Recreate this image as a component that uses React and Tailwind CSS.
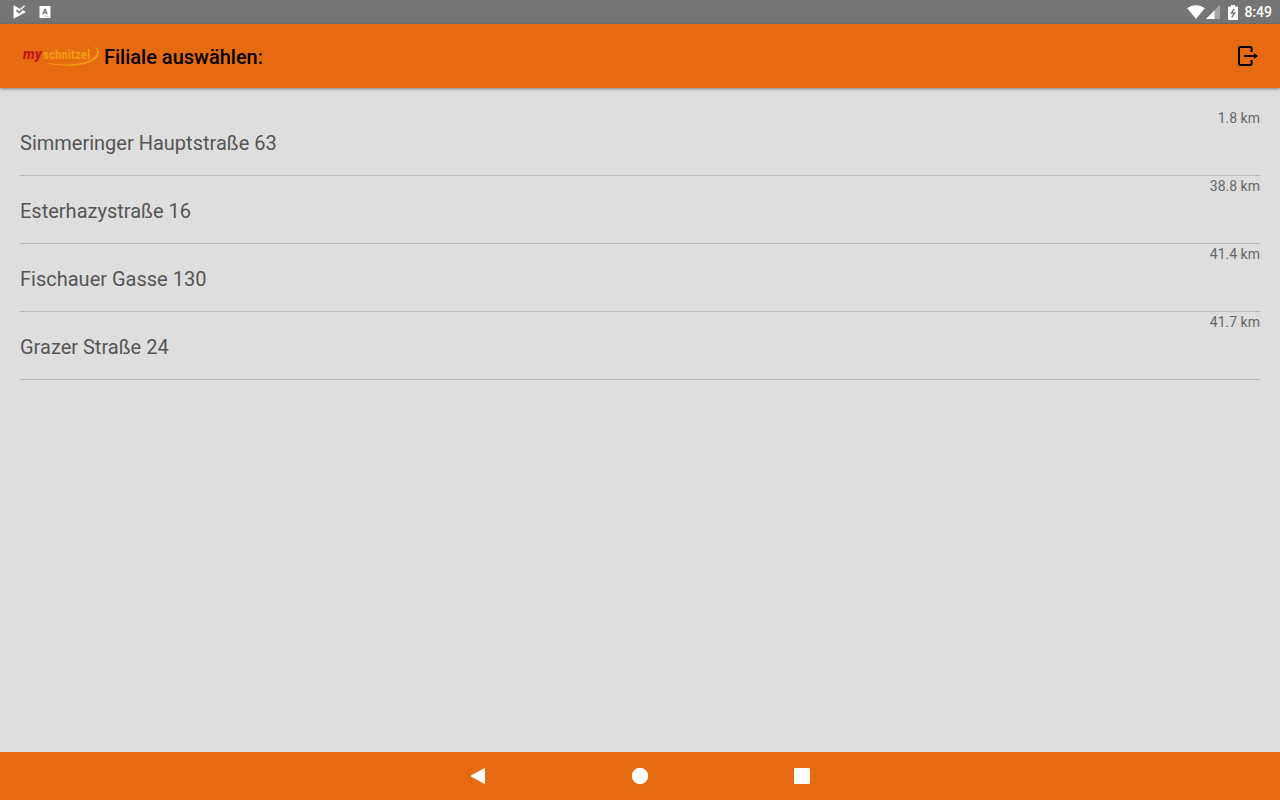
import React from "react";

const branches = [
  { name: "Simmeringer Hauptstraße 63", distance: "1.8 km" },
  { name: "Esterhazystraße 16", distance: "38.8 km" },
  { name: "Fischauer Gasse 130", distance: "41.4 km" },
  { name: "Grazer Straße 24", distance: "41.7 km" },
];

const StatusBar = () => (
  <div className="flex h-6 items-center justify-between bg-[#757575] pl-3 pr-2 text-white">
    <div className="flex items-center gap-3">
      <svg width="15" height="16" viewBox="0 0 15 16" aria-hidden="true">
        <path d="M1.5 1.2 L14 8 L1.5 14.8 Z" fill="#fff" />
        <path
          d="M4.4 6.2 L7 8.6 L13.5 2.4"
          fill="none"
          stroke="#757575"
          strokeWidth="1.6"
        />
        <path
          d="M8.6 5.4 L12.6 1.8"
          fill="none"
          stroke="#fff"
          strokeWidth="1.4"
        />
      </svg>
      <svg width="12" height="12" viewBox="0 0 12 12" aria-hidden="true">
        <rect x="0.5" y="0" width="11" height="12" rx="1.2" fill="#fff" />
        <path
          d="M3.8 8.2 L5.8 3.4 H6.2 L8.2 8.2 M4.6 6.8 H7.4"
          fill="none"
          stroke="#666"
          strokeWidth="1.1"
        />
        <path d="M5.5 10.4 H10" stroke="#aaa" strokeWidth="0.6" />
      </svg>
    </div>
    <div className="flex items-center">
      <svg width="18" height="14" viewBox="0 0 18 14" aria-hidden="true">
        <path d="M0.2 3.2 C5.2 -0.9 12.8 -0.9 17.8 3.2 L9 14 Z" fill="#fff" />
      </svg>
      <svg
        className="ml-px"
        width="14"
        height="14"
        viewBox="0 0 14 14"
        aria-hidden="true"
      >
        <path d="M0 14 L14 0 V14 Z" fill="#fff" opacity="0.35" />
        <path d="M0 14 L8.5 5.5 V14 Z" fill="#fff" />
      </svg>
      <svg
        className="ml-2"
        width="10"
        height="15"
        viewBox="0 0 10 15"
        aria-hidden="true"
      >
        <path
          d="M3 0 H7 V1.5 H9 Q10 1.5 10 2.5 V14 Q10 15 9 15 H1 Q0 15 0 14 V2.5 Q0 1.5 1 1.5 H3 Z"
          fill="#fff"
        />
        <path
          d="M6.2 4 L3.4 8 H6.6 L3.8 12.4"
          fill="none"
          stroke="#757575"
          strokeWidth="1.4"
        />
      </svg>
      <span className="ml-1.5 text-sm font-medium">8:49</span>
    </div>
  </div>
);

const Logo = () => (
  <svg
    width="80"
    height="28"
    viewBox="0 0 80 28"
    role="img"
    aria-label="myschnitzel"
  >
    <text
      x="3"
      y="17"
      className="font-['Roboto',sans-serif] text-[14px] font-black italic"
      fill="#c4171c"
    >
      my
    </text>
    <text
      x="23"
      y="17"
      className="font-['Roboto_Condensed','Roboto',sans-serif] text-[13px] font-bold"
      fill="#f29a12"
    >
      schnitzel
    </text>
    <path
      d="M74 4.6 C81 6.5 81 13 74 18 C65 24.6 42 26 23.5 20.6 C42 23.8 63 22.8 72 17 C78 12.5 78.5 8 74 4.6 Z"
      fill="#f29a12"
    />
  </svg>
);

const Header = () => (
  <header className="z-10 flex h-16 items-center justify-between bg-[#e66a10] px-5 shadow-[0_1px_3px_rgba(0,0,0,0.45)]">
    <div className="flex items-center gap-1">
      <Logo />
      <h1 className="pt-0.5 text-xl font-medium text-black">
        Filiale auswählen:
      </h1>
    </div>
    <button type="button" aria-label="Abmelden">
      <svg width="24" height="24" viewBox="0 0 24 24" fill="none">
        <path
          d="M15.5 8 V4 Q15.5 3 14.5 3 H4 Q3 3 3 4 V20 Q3 21 4 21 H14.5 Q15.5 21 15.5 20 V16"
          stroke="#000"
          strokeWidth="2"
        />
        <path d="M8 12 H19" stroke="#000" strokeWidth="2" />
        <path d="M18 9 L22 12 L18 15 Z" fill="#000" />
      </svg>
    </button>
  </header>
);

const BranchRow = ({ name, distance }) => (
  <li className="flex h-[68px] justify-between border-b border-[#b9b9b9]">
    <a href="#" className="flex flex-1 items-center pt-0.5 text-xl text-[#555]">
      {name}
    </a>
    <span className="text-sm text-[#666]">{distance}</span>
  </li>
);

const NavBar = () => (
  <nav className="flex h-12 items-center justify-center gap-[138px] bg-[#e66a10]">
    <button type="button" aria-label="Zurück">
      <svg width="24" height="24" viewBox="0 0 24 24">
        <path
          d="M18 4.2 Q19 3.8 19 5 V19 Q19 20.2 18 19.8 L5.4 12.8 Q4.4 12 5.4 11.2 Z"
          fill="#fff"
        />
      </svg>
    </button>
    <button type="button" aria-label="Startseite">
      <svg width="24" height="24" viewBox="0 0 24 24">
        <circle cx="12" cy="12" r="8.2" fill="#fff" />
      </svg>
    </button>
    <button type="button" aria-label="Übersicht">
      <svg width="24" height="24" viewBox="0 0 24 24">
        <rect x="4" y="4" width="16" height="16" rx="1.2" fill="#fff" />
      </svg>
    </button>
  </nav>
);

const App = () => {
  return (
    <div className="flex min-h-screen flex-col bg-[#dedede] font-['Roboto',sans-serif]">
      <StatusBar />
      <Header />
      <main className="flex-1 px-5 pt-5">
        <ul>
          {branches.map((branch) => (
            <BranchRow key={branch.name} {...branch} />
          ))}
        </ul>
      </main>
      <NavBar />
    </div>
  );
};

export default App;
